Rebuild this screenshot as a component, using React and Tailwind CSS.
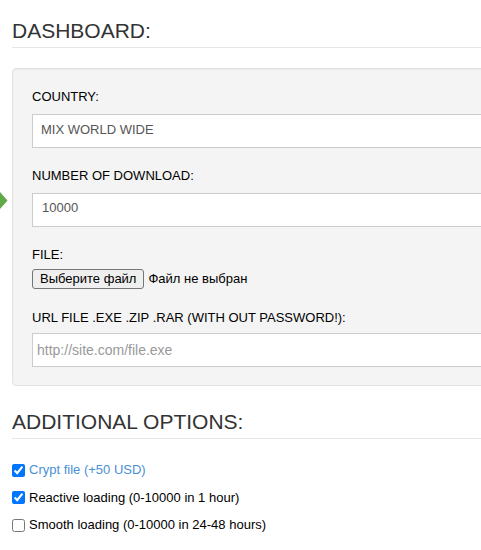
import React from "react";

const Label = ({ children, className = "" }) => (
  <div className={`text-[13px] leading-[20px] text-black ${className}`}>{children}</div>
);

const Heading = ({ children, className = "" }) => (
  <div className={`border-b border-[#e6e6e6] pb-[4px] ${className}`}>
    <h2 className="text-[21px] leading-[24px] text-[#333]">{children}</h2>
  </div>
);

const Option = ({ checked, blue, children }) => (
  <label className="flex h-[20px] items-center">
    <input
      type="checkbox"
      defaultChecked={checked}
      className="m-0 h-[13px] w-[13px]"
    />
    <span className={`ml-[4px] text-[13px] ${blue ? "text-[#4a8fd6]" : "text-black"}`}>
      {children}
    </span>
  </label>
);

export default function App() {
  return (
    <div className="relative min-h-screen w-full overflow-hidden bg-white font-['Liberation_Sans',Arial,sans-serif]">
      {/* зелёная стрелка у левого края */}
      <svg className="absolute left-0 top-[192px]" width="8" height="17" viewBox="0 0 8 17">
        <polygon points="0,0 7.5,8.5 0,17" fill="#5fa94a" />
      </svg>

      <div className="w-[560px] pl-[12px]">
        <Heading className="pt-[19px]">DASHBOARD:</Heading>

        {/* панель с формой */}
        <div className="mt-[20px] rounded-[4px] border border-[#e3e3e3] bg-[#f4f4f4] px-[19px] pb-[18px] pt-[18px] shadow-[inset_0_1px_1px_rgba(0,0,0,0.05)]">
          <Label className="mb-[7px]">COUNTRY:</Label>
          <input
            readOnly
            value="MIX WORLD WIDE"
            className="block h-[34px] w-full border border-[#ccc] bg-white px-[8px] pb-[4px] text-[13px] text-[#555] outline-none"
          />

          <Label className="mb-[7px] mt-[18px]">NUMBER OF DOWNLOAD:</Label>
          <input
            readOnly
            value="10000"
            className="block h-[34px] w-full border border-[#ccc] bg-white px-[9px] pb-[5px] text-[13px] text-[#555] outline-none"
          />

          <Label className="mb-[4px] mt-[18px]">FILE:</Label>
          <div className="flex h-[20px] items-center">
            <button className="h-[20px] rounded-[3px] border border-[#767676] bg-[#efefef] px-[7px] text-[13px] leading-[16px] text-black">
              Выберите файл
            </button>
            <span className="ml-[4px] text-[13px] text-black">Файл не выбран</span>
          </div>

          <Label className="mb-[5px] mt-[19px]">URL FILE .EXE .ZIP .RAR (WITH OUT PASSWORD!):</Label>
          <input
            placeholder="http://site.com/file.exe"
            className="block h-[34px] w-full border border-[#ccc] bg-white px-[4px] text-[14px] text-[#555] outline-none placeholder:text-[#999]"
          />
        </div>

        <Heading className="mt-[24px]">ADDITIONAL OPTIONS:</Heading>

        <div className="mt-[21px] flex flex-col gap-[7.5px]">
          <Option checked blue>Crypt file (+50 USD)</Option>
          <Option checked>Reactive loading (0-10000 in 1 hour)</Option>
          <Option>Smooth loading (0-10000 in 24-48 hours)</Option>
        </div>
      </div>
    </div>
  );
}
